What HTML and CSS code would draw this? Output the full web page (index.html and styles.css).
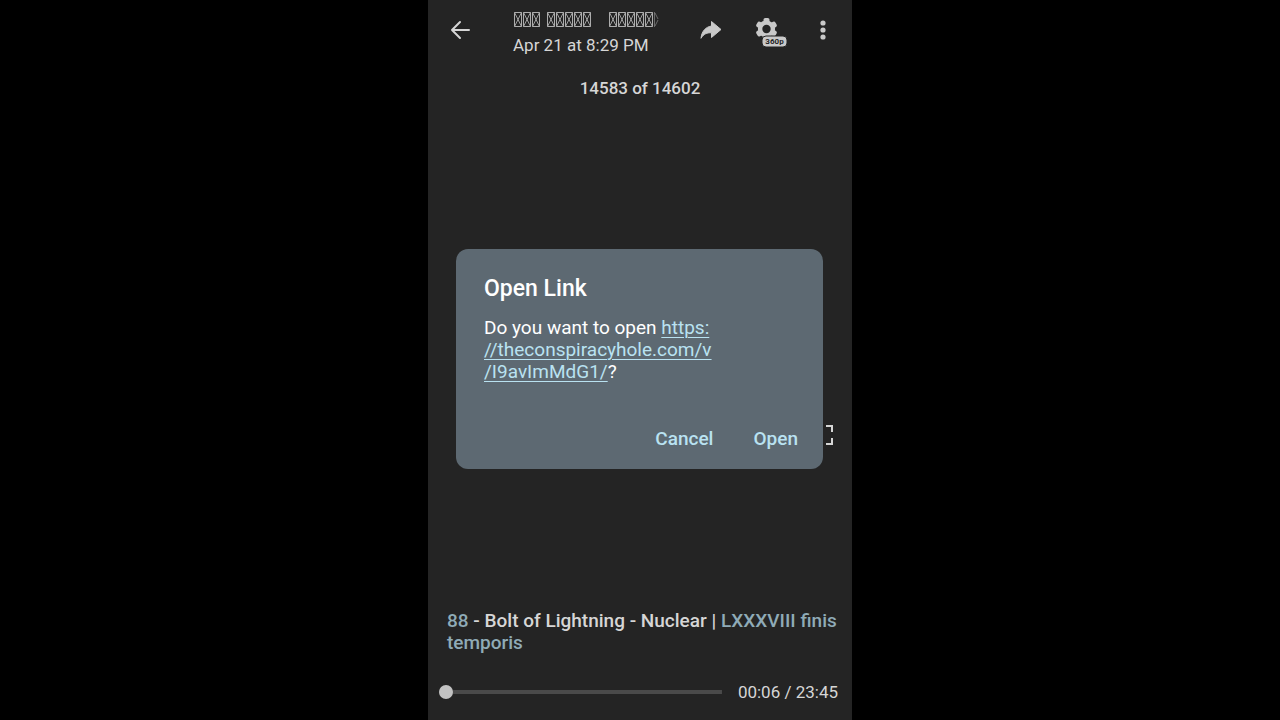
FILE: index.html
```
<!DOCTYPE html>
<html lang="en">
<head>
<meta charset="utf-8">
<meta name="viewport" content="width=device-width, initial-scale=1">
<title>Open Link</title>
<link rel="stylesheet" href="styles.css">
</head>
<body>
<main class="viewer">
  <header class="topbar">
    <button class="icon-button" type="button" aria-label="Back">
      <svg width="24" height="24" viewBox="0 0 24 24" fill="none" stroke="currentColor" stroke-width="2" stroke-linecap="round" stroke-linejoin="round"><path d="M20 12H3M11 4L3 12l8 8"/></svg>
    </button>
    <div class="meta">
      <svg class="sender" width="147" height="16" viewBox="0 0 147 16" role="img" aria-label="Sender">
        <defs>
          <g id="box" fill="none" stroke="currentColor"><path stroke-width="1" d="M.5 .5h7v14h-7z"/><path stroke-width=".9" d="M.5 .5l7 14M7.500 .5l-7 14"/></g>
        </defs>
        <use href="#box" x="1"/><use href="#box" x="10"/><use href="#box" x="19"/>
        <use href="#box" x="34"/><use href="#box" x="43"/><use href="#box" x="52"/><use href="#box" x="61"/><use href="#box" x="70"/>
        <use href="#box" x="96"/><use href="#box" x="105"/><use href="#box" x="114"/><use href="#box" x="123"/><use href="#box" x="132"/>
        <path d="M141.500 0v15M142 1l3 6M142 14l3-6" fill="none" stroke="currentColor" opacity=".5"/>
      </svg>
      <time class="date">Apr 21 at 8:29 PM</time>
    </div>
    <div class="actions">
      <button class="icon-button" type="button" aria-label="Share">
        <svg width="22" height="20" viewBox="0 0 22 20" fill="currentColor" stroke="currentColor" stroke-linejoin="round"><path d="M11.500 1.500l9.500 8-9.500 8v-4.700C7 12.500 3.500 14 1 18.300 1.600 11.500 5.500 7 11.500 6z"/></svg>
      </button>
      <button class="icon-button" type="button" aria-label="Quality">
        <svg width="32" height="34" viewBox="0 0 32 34" fill="currentColor">
          <defs><rect id="tooth" x="8.500" y="5" width="6" height="6" rx="1.800"/></defs>
          <circle cx="11.500" cy="16" r="6.400" fill="none" stroke="currentColor" stroke-width="4.400"/>
          <use href="#tooth"/>
          <use href="#tooth" transform="rotate(60 11.500 16)"/>
          <use href="#tooth" transform="rotate(120 11.500 16)"/>
          <use href="#tooth" transform="rotate(180 11.500 16)"/>
          <use href="#tooth" transform="rotate(240 11.500 16)"/>
          <use href="#tooth" transform="rotate(300 11.500 16)"/>
          <rect class="badge-outline" x="7" y="23" width="25" height="11" rx="4"/>
          <text class="badge-text" x="19.500" y="31" text-anchor="middle">360p</text>
        </svg>
      </button>
      <button class="icon-button" type="button" aria-label="More options">
        <svg width="6" height="20" viewBox="0 0 6 20" fill="currentColor"><circle cx="3" cy="3" r="2.600"/><circle cx="3" cy="10" r="2.600"/><circle cx="3" cy="17" r="2.600"/></svg>
      </button>
    </div>
  </header>
  <p class="counter">14583 of 14602</p>
  <div class="stage">
    <button class="icon-button" type="button" aria-label="Full screen">
      <svg width="20" height="20" viewBox="0 0 20 20" fill="none" stroke="currentColor" stroke-width="2"><path d="M1 7V1h6M13 1h6v6M19 13v6h-6M7 19H1v-6"/></svg>
    </button>
  </div>
  <p class="caption"><a href="#">88</a> - Bolt of Lightning - Nuclear | <a href="#">LXXXVIII finis temporis</a></p>
  <div class="player">
    <input class="seek" type="range" min="0" max="1425" value="0" aria-label="Seek">
    <span class="time">00:06 / 23:45</span>
  </div>
  <div class="overlay">
    <section class="dialog" role="dialog" aria-labelledby="dialog-title">
      <h1 class="dialog-title" id="dialog-title">Open Link</h1>
      <p class="dialog-text">Do you want to open <a href="#">https:<br>//theconspiracyhole.com/v<br>/I9avImMdG1/</a>?</p>
      <div class="dialog-actions">
        <button class="text-button" type="button">Cancel</button>
        <button class="text-button" type="button">Open</button>
      </div>
    </section>
  </div>
</main>
</body>
</html>
```
FILE: styles.css
```
* { box-sizing: border-box; }
body {
  margin: 0;
  background: #000;
  color: #d6d6d6;
  font-family: Roboto, sans-serif;
}
p, h1 { margin: 0; }
button {
  padding: 0;
  border: 0;
  background: none;
  color: inherit;
  font: inherit;
  cursor: pointer;
}
.viewer {
  position: relative;
  display: flex;
  flex-direction: column;
  max-width: 424px;
  min-height: 100vh;
  margin: 0 auto;
  background: #242424;
}
.topbar {
  display: flex;
  align-items: center;
  height: 60px;
  padding: 0 26px 0 21px;
}
.icon-button { display: flex; }
.meta {
  flex: 1;
  display: flex;
  flex-direction: column;
  gap: 7px;
  padding: 7px 0 0 40px;
}
.sender { color: #adadad; }
.date {
  font-size: 17px;
  line-height: 20px;
}
.actions {
  display: flex;
  align-items: center;
  gap: 33px;
  color: #c9c9c9;
}
.badge-outline {
  stroke: #242424;
  stroke-width: 1;
}
.badge-text {
  fill: #242424;
  font-size: 8px;
  font-weight: 700;
}
.counter {
  padding-top: 18px;
  font-size: 17px;
  font-weight: 500;
  line-height: 20px;
  text-align: center;
}
.stage {
  flex: 1;
  display: flex;
  align-items: flex-end;
  justify-content: flex-end;
  padding: 0 19px 165px;
}
.caption {
  padding: 0 8px 0 19px;
  font-size: 19px;
  font-weight: 500;
  line-height: 22px;
}
.caption a {
  color: #8fabb7;
  text-decoration: none;
}
.player {
  display: flex;
  align-items: center;
  gap: 16px;
  padding: 27px 14px 17px 11px;
}
.seek {
  flex: 1;
  min-width: 0;
  height: 14px;
  margin: 0;
  appearance: none;
  background: linear-gradient(#4a4a4a, #4a4a4a) center / 100% 4px no-repeat;
  border-radius: 2px;
}
.seek::-webkit-slider-thumb {
  appearance: none;
  width: 14px;
  height: 14px;
  border-radius: 50%;
  background: #c2c2c2;
}
.time {
  font-size: 17px;
  line-height: 22px;
}
.overlay {
  position: absolute;
  inset: 0;
  display: grid;
  align-items: center;
  padding: 0 29px 2px 28px;
}
.dialog {
  padding: 24px 17px 16px 28px;
  border-radius: 12px;
  background: #5d6972;
  color: #fff;
}
.dialog-title {
  font-size: 23px;
  font-weight: 500;
  line-height: 32px;
}
.dialog-text {
  padding-top: 12px;
  font-size: 19px;
  line-height: 22px;
}
.dialog-text a {
  color: #b9e2f1;
  text-decoration-thickness: 1px;
  text-underline-offset: 3px;
}
.dialog-actions {
  display: flex;
  justify-content: flex-end;
  gap: 24px;
  padding-top: 42px;
}
.text-button {
  padding: 0 8px;
  color: #b9e2f1;
  font-size: 19px;
  font-weight: 500;
  line-height: 28px;
}
```
